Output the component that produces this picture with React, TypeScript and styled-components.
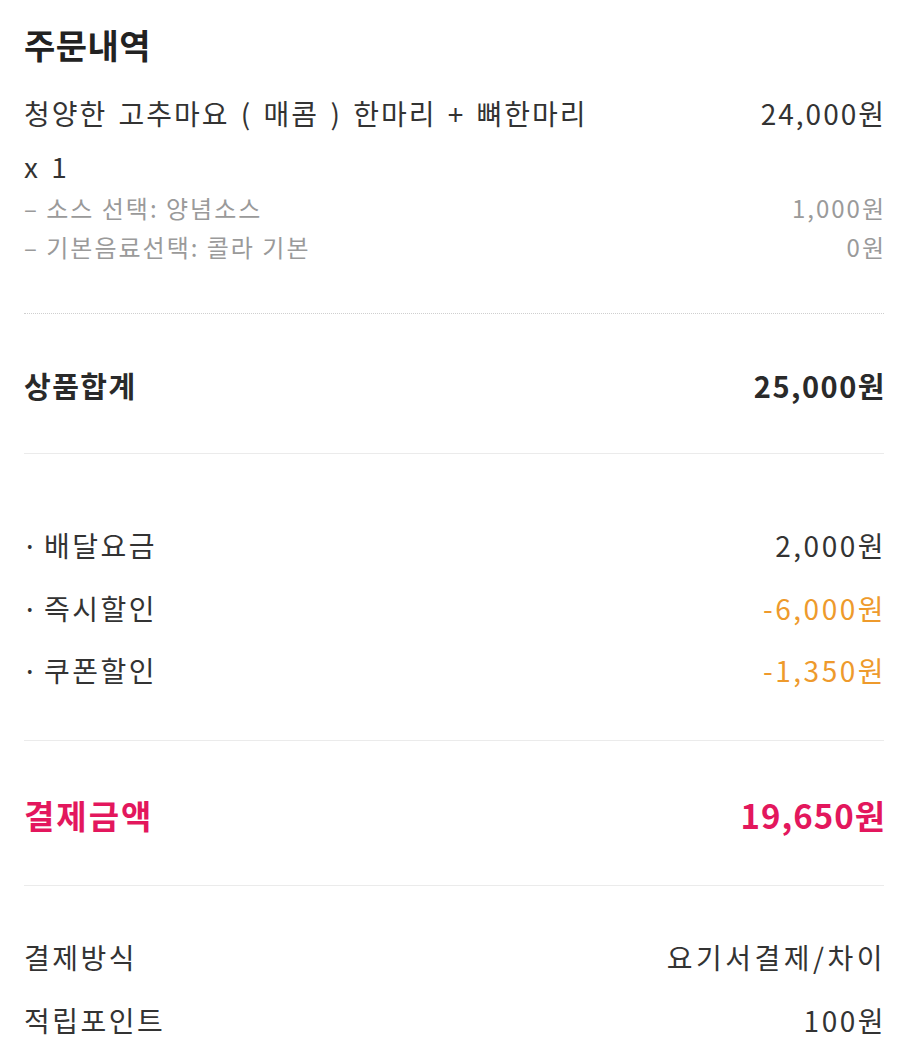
import styled, { createGlobalStyle } from 'styled-components';

const GlobalStyle = createGlobalStyle`
  body {
    margin: 0;
    background: #ffffff;
    font-family: 'Noto Sans CJK KR', 'Noto Sans', sans-serif;
    color: #333333;
  }
`;

type Line = { label: string; value: string; tone?: 'normal' | 'discount' };

const charges: Line[] = [
  { label: '배달요금', value: '2,000원' },
  { label: '즉시할인', value: '-6,000원', tone: 'discount' },
  { label: '쿠폰할인', value: '-1,350원', tone: 'discount' },
];

const options: Line[] = [
  { label: '– 소스 선택: 양념소스', value: '1,000원' },
  { label: '– 기본음료선택: 콜라 기본', value: '0원' },
];

const App = () => {
  return (
    <>
      <GlobalStyle />
      <Page>
        <OrderSection>
          <Title>주문내역</Title>
          <ItemRow>
            <ItemName>
              청양한 고추마요 ( 매콤 ) 한마리 + 뼈한마리
              <Qty>x 1</Qty>
            </ItemName>
            <ItemPrice>24,000원</ItemPrice>
          </ItemRow>
          <Options>
            {options.map((opt) => (
              <OptionRow key={opt.label}>
                <span>{opt.label}</span>
                <span>{opt.value}</span>
              </OptionRow>
            ))}
          </Options>
        </OrderSection>

        <SubtotalSection>
          <TotalRow>
            <span>상품합계</span>
            <span>25,000원</span>
          </TotalRow>
        </SubtotalSection>

        <ChargeSection>
          {charges.map((c) => (
            <ChargeRow key={c.label}>
              <span>
                <Bullet>·</Bullet>
                {c.label}
              </span>
              <Amount tone={c.tone}>{c.value}</Amount>
            </ChargeRow>
          ))}
        </ChargeSection>

        <PaySection>
          <PayRow>
            <span>결제금액</span>
            <PayAmount>19,650원</PayAmount>
          </PayRow>
        </PaySection>

        <InfoSection>
          <InfoRow>
            <span>결제방식</span>
            <InfoValue>요기서결제/차이</InfoValue>
          </InfoRow>
          <InfoRow>
            <span>적립포인트</span>
            <span>100원</span>
          </InfoRow>
        </InfoSection>
      </Page>
    </>
  );
};

const Page = styled.div`
  width: 900px;
  box-sizing: border-box;
  padding: 0 16px 0 24px;
`;

const OrderSection = styled.section`
  padding: 24px 0 47px;
  border-bottom: 1px dotted #cfcfcf;
`;

const Title = styled.h2`
  margin: 0 0 27px;
  font-size: 34px;
  line-height: 42px;
  font-weight: 700;
  letter-spacing: 0.5px;
  color: #222222;
`;

const ItemRow = styled.div`
  display: flex;
  justify-content: space-between;
  align-items: flex-start;
  font-size: 28px;
  line-height: 40px;
  letter-spacing: 2px;
  color: #333333;
`;

const ItemName = styled.div`
  display: flex;
  flex-direction: column;
  gap: 13px;
  word-spacing: 3px;
`;

const Qty = styled.span``;

const ItemPrice = styled.span`
  white-space: nowrap;
  margin-right: -2px;
`;

const Options = styled.div`
  margin-top: 2px;
`;

const OptionRow = styled.div`
  display: flex;
  justify-content: space-between;
  font-size: 24px;
  line-height: 39px;
  letter-spacing: 2px;
  margin-right: -2px;
  color: #9a9a9a;
`;

const SubtotalSection = styled.section`
  padding: 51px 0 48px;
  border-bottom: 1px solid #ebebeb;
`;

const Row = styled.div`
  display: flex;
  justify-content: space-between;
  align-items: center;
  margin-right: -2px;
`;

const TotalRow = styled(Row)`
  font-size: 29px;
  line-height: 40px;
  font-weight: 700;
  letter-spacing: 1.5px;
  color: #2a2a2a;
`;

const ChargeSection = styled.section`
  display: flex;
  flex-direction: column;
  gap: 22.5px;
  padding: 71px 0 50px;
  border-bottom: 1px solid #ebebeb;
`;

const ChargeRow = styled(Row)`
  font-size: 28px;
  line-height: 40px;
  letter-spacing: 2.5px;
  color: #333333;
`;

const Bullet = styled.span`
  display: inline-block;
  width: 22px;
  margin-left: -2px;
`;

const Amount = styled.span<{ tone?: 'normal' | 'discount' }>`
  color: ${({ tone }) => (tone === 'discount' ? '#ee9a2c' : '#333333')};
`;

const PaySection = styled.section`
  padding: 52px 0 48px;
  border-bottom: 1px solid #ebebeb;
`;

const PayRow = styled(Row)`
  font-size: 33px;
  line-height: 44px;
  font-weight: 700;
  letter-spacing: 2px;
  color: #e3175d;
`;

const PayAmount = styled.span`
  letter-spacing: 1px;
`;

const InfoSection = styled.section`
  display: flex;
  flex-direction: column;
  gap: 23px;
  padding: 51px 0 20px;
`;

const InfoRow = styled(Row)`
  font-size: 28px;
  line-height: 40px;
  letter-spacing: 2.5px;
  color: #333333;
`;

const InfoValue = styled.span`
  letter-spacing: 3.5px;
`;

export default App;
